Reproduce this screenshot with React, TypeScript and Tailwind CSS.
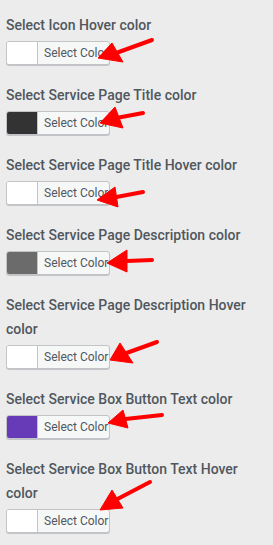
import React from "react"

const items = [
  { label: "Select Icon Hover color", color: "#ffffff" },
  { label: "Select Service Page Title color", color: "#333333" },
  { label: "Select Service Page Title Hover color", color: "#ffffff" },
  { label: "Select Service Page Description color", color: "#6b6b6b" },
  { label: "Select Service Page Description Hover color", color: "#ffffff" },
  { label: "Select Service Box Button Text color", color: "#673ab7" },
  { label: "Select Service Box Button Text Hover color", color: "#ffffff" },
]

// tail, tip, head corners
const arrows = [
  { tail: [152, 40], tip: [98, 58], a: [112, 43], b: [123, 62] },
  { tail: [143, 113], tip: [100, 123], a: [115, 107], b: [123, 128] },
  { tail: [143, 192], tip: [97, 200], a: [115, 187], b: [118, 207] },
  { tail: [152, 260], tip: [107, 263], a: [127, 250], b: [127, 272] },
  { tail: [157, 342], tip: [110, 360], a: [120, 343], b: [133, 363] },
  { tail: [162, 415], tip: [108, 423], a: [123, 410], b: [128, 428] },
  { tail: [150, 482], tip: [100, 510], a: [112, 490], b: [123, 508] },
]

function ColorButton({ color }: { color: string }) {
  return (
    <button className="flex h-[24px] w-[104px] overflow-hidden rounded-[3px] border border-[#c3c4c7] bg-[#f6f7f7] shadow-[0_1px_0_#c3c4c7]">
      <span className="h-full w-[31px] border-r border-[#c3c4c7]" style={{ background: color }} />
      <span className="flex h-full flex-1 items-center pl-[6px] text-[12px] text-[#50575e]">Select Color</span>
    </button>
  )
}

export default function App() {
  return (
    <div className="relative min-h-[545px] w-[273px] bg-[#ececec] font-['Roboto',sans-serif]">
      <div className="px-[6px] pt-[13px]">
        {items.map((item) => (
          <div key={item.label} className="mb-[18px]">
            <div className="text-[14px] font-medium leading-[24px] text-[#50575e]">{item.label}</div>
            <div className="mt-[4px]">
              <ColorButton color={item.color} />
            </div>
          </div>
        ))}
      </div>
      <svg className="pointer-events-none absolute left-0 top-0" width="273" height="545">
        {arrows.map((ar, i) => {
          const mx = (ar.a[0] + ar.b[0]) / 2
          const my = (ar.a[1] + ar.b[1]) / 2
          return (
            <g key={i} fill="#ff0000" stroke="#ff0000">
              <line x1={ar.tail[0]} y1={ar.tail[1]} x2={mx} y2={my} strokeWidth="4" strokeLinecap="round" />
              <polygon points={`${ar.tip[0]},${ar.tip[1]} ${ar.a[0]},${ar.a[1]} ${ar.b[0]},${ar.b[1]}`} strokeWidth="1" strokeLinejoin="round" />
            </g>
          )
        })}
      </svg>
    </div>
  )
}
